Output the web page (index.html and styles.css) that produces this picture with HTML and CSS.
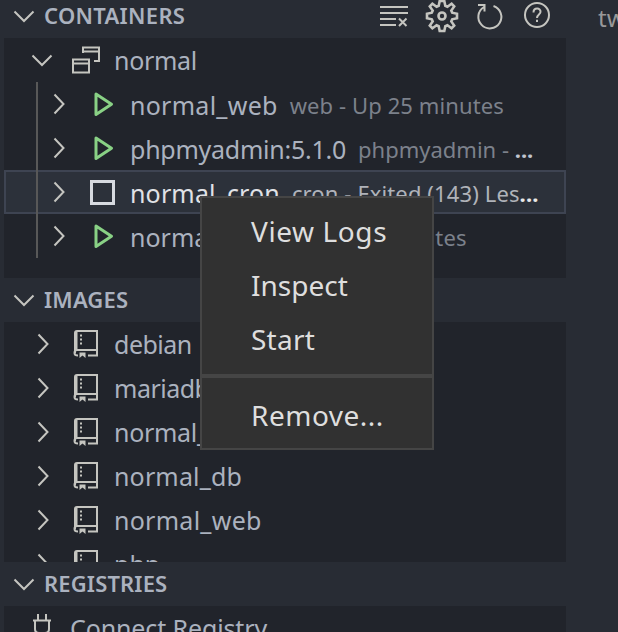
FILE: index.html
```
<!DOCTYPE html>
<html lang="en">
<head>
<meta charset="utf-8">
<title>Containers</title>
<link rel="stylesheet" href="styles.css">
</head>
<body>
<svg class="defs" width="0" height="0">
  <symbol id="down" viewBox="0 0 22 14"><path d="M1.5 2.500 11 12 20.500 2.500"/></symbol>
  <symbol id="right" viewBox="0 0 14 22"><path d="M1.500 1.500 10.500 11 1.500 20.500"/></symbol>
  <symbol id="play" viewBox="0 0 22 26"><path d="M3 3V23.500L18.500 13.200Z"/></symbol>
  <symbol id="book" viewBox="0 0 26 30"><path d="M2 24V4Q2 2 4 2H24V26.500H15M24 21H4Q1.500 21 1.500 24Q1.500 26.500 5 26.500M3.500 3V21"/><path class="dots" d="M7 5.500h2v2h-2zM7 9.500h2v2h-2zM7 13.500h2v2h-2zM6.500 23.500h6V29l-3-2.500L6.500 29z"/></symbol>
</svg>
<main class="window">
  <aside class="sidebar">
    <header class="section first"><svg class="down"><use href="#down"/></svg><h2 class="t-containers">CONTAINERS</h2>
      <div class="actions">
        <svg width="30" height="24" viewBox="0 0 30 24"><path d="M1 3H29M1 9H29M1 15H17M1 21H17M20 14.500 27.500 22M27.500 14.500 20 22"/></svg>
        <svg class="gear" width="34" height="34" viewBox="-17 -17 34 34"><path d="M-2.300 -15H2.300L3.300 -10.200L5.400 -9.300L9.600 -12.200L12.200 -9.600L9.300 -5.400L10.200 -3.300L15 -2.300V2.300L10.200 3.300L9.300 5.400L12.200 9.600L9.600 12.200L5.400 9.300L3.300 10.200L2.300 15H-2.300L-3.300 10.200L-5.400 9.300L-9.600 12.200L-12.200 9.600L-9.300 5.400L-10.200 3.300L-15 2.300V-2.300L-10.200 -3.300L-9.300 -5.400L-12.200 -9.600L-9.600 -12.200L-5.400 -9.300L-3.300 -10.200Z"/><circle r="3.500"/></svg>
        <svg class="refresh" width="28" height="28" viewBox="0 0 28 28"><path d="M17.500 4A11.500 11.500 0 1 1 8 5M2 3H8.500V9.500"/></svg>
        <svg width="28" height="28" viewBox="0 0 28 28"><circle cx="14" cy="13" r="12"/><path d="M10.500 10.500C10.500 5 18 5.500 17.500 10C17.300 12.500 14 12.500 14 16M14 17.800V20"/></svg>
      </div>
    </header>
    <div class="tree containers">
      <div class="row root"><svg class="down"><use href="#down"/></svg><svg class="group" viewBox="0 0 30 28"><path d="M12 7V1.500H28V15H23M12 5.500H28M2 13.500H18V26.500H2ZM2 17.500H18"/></svg><span class="name t-normal">normal</span></div>
      <div class="children">
        <div class="row"><svg class="right"><use href="#right"/></svg><svg class="play"><use href="#play"/></svg><span class="name t-wide">normal_web</span><span class="desc t-web">web - Up 25 minutes</span></div>
        <div class="row"><svg class="right"><use href="#right"/></svg><svg class="play"><use href="#play"/></svg><span class="name t-php">phpmyadmin:5.1.0</span><span class="desc">phpmyadmin - <b>...</b></span></div>
        <div class="row selected"><svg class="right"><use href="#right"/></svg><i class="stopped"></i><span class="name t-cron">normal_cron</span><span class="desc t-crond">cron - Exited (143) Les<b>...</b></span></div>
        <div class="row"><svg class="right"><use href="#right"/></svg><svg class="play"><use href="#play"/></svg><span class="name">normal_db</span><span class="desc t-db">db - Up 25 minutes</span></div>
      </div>
    </div>
    <header class="section"><svg class="down"><use href="#down"/></svg><h2 class="t-images">IMAGES</h2></header>
    <div class="tree images">
      <div class="row"><svg class="right"><use href="#right"/></svg><svg class="book"><use href="#book"/></svg><span class="name t-debian">debian</span></div>
      <div class="row"><svg class="right"><use href="#right"/></svg><svg class="book"><use href="#book"/></svg><span class="name t-debian">mariadb</span></div>
      <div class="row"><svg class="right"><use href="#right"/></svg><svg class="book"><use href="#book"/></svg><span class="name t-normal">normal_cron</span></div>
      <div class="row"><svg class="right"><use href="#right"/></svg><svg class="book"><use href="#book"/></svg><span class="name t-cron">normal_db</span></div>
      <div class="row"><svg class="right"><use href="#right"/></svg><svg class="book"><use href="#book"/></svg><span class="name t-wide">normal_web</span></div>
      <div class="row"><svg class="right"><use href="#right"/></svg><svg class="book"><use href="#book"/></svg><span class="name">php</span></div>
    </div>
    <header class="section"><svg class="down"><use href="#down"/></svg><h2 class="t-registries">REGISTRIES</h2></header>
    <div class="tree"><div class="row connect"><svg width="20" height="30" viewBox="0 0 20 30"><path d="M6 1V7M14 1V7M1 7.500H19M3 7.500V16Q3 20 7 20H13Q17 20 17 16V7.500M10 20V28"/></svg><span class="name t-connect">Connect Registry</span></div></div>
  </aside>
  <div class="editor">tw</div>
</main>
<nav class="menu"><div class="t-logs">View Logs</div><div>Inspect</div><div class="t-start">Start</div><hr><div class="t-remove">Remove...</div></nav>
</body>
</html>
```
FILE: styles.css
```
* { box-sizing: border-box; }
body { margin: 0; background: #282c34; color: #abb2bf; font: 25px "Noto Sans", sans-serif; overflow: hidden; }
.defs { position: absolute; }
svg { flex: none; fill: none; stroke: #c5c5c0; stroke-width: 2; overflow: visible; }
.window { display: flex; height: 632px; overflow: hidden; }
.sidebar { width: 566px; padding-left: 4px; flex: none; }
.section { height: 44px; display: flex; align-items: center; padding-left: 9px; }
.first { height: 38px; padding-bottom: 6px; }
h2 { margin: 0 0 0 9px; font-size: 22px; font-weight: 600; line-height: 44px; white-space: nowrap; padding-bottom: 2px; }
.actions { display: flex; align-items: center; margin-left: auto; padding-right: 15px; }
.gear { margin: 0 17px 0 16px; stroke-width: 2.6; }
.refresh { margin-right: 19px; }
.down { width: 22px; height: 14px; }
.right { width: 14px; height: 22px; margin-left: 1px; }
.tree { background: #21242b; overflow: hidden; }
.containers { height: 240px; }
.images { height: 240px; }
.row { height: 44px; display: flex; align-items: center; padding-left: 32px; white-space: nowrap; position: relative; }
.root { padding-left: 27px; }
.group { width: 30px; height: 28px; margin-left: 18px; }
.group + .name { margin-left: 13px; }
.name { line-height: 44px; }
.children { position: relative; }
.children::before { content: ""; position: absolute; z-index: 1; left: 32px; top: 0; width: 2px; height: 176px; background: #585858; }
.children .row { padding-left: 48px; }
.children .name { padding-top: 1px; }
.play { width: 22px; height: 26px; margin-left: 26px; stroke: #89d185; stroke-width: 3; stroke-linejoin: round; }
.stopped { width: 25px; height: 25px; border: 3px solid #d7dae0; margin: 0 15px 0 23px; flex: none; }
.play + .name { margin-left: 15px; }
.desc { margin-left: 12px; font-size: 22px; color: #7c818b; line-height: 44px; padding-top: 1px; }
.desc b { color: #c0c5cf; }
.selected { background: #2c313a; color: #e0e2e6; }
.selected::after { content: ""; position: absolute; inset: 0; border: 2px solid #3e4452; }
.selected .desc { color: #b0b3b9; }
.selected .desc b { color: #e8e8e8; }
.book { width: 26px; height: 30px; margin-left: 22px; }
.book + .name { margin-left: 15px; }
.dots { fill: #c5c5c0; stroke: none; }
.connect { padding-left: 28px; }
.connect .name { margin-left: 18px; }
.editor { padding-left: 32px; line-height: 36px; font-size: 24px; color: #999; }
.menu { position: absolute; left: 200px; top: 196px; width: 234px; height: 254px; background: #313131; border: 2px solid #454545; padding-top: 6px; color: #dedede; font-size: 28px; white-space: nowrap; }
.menu div { height: 54px; line-height: 54px; padding-left: 49px; }
.menu hr { height: 4px; margin: 8px 0 10px; border: 0; background: #454545; }
.t-containers { letter-spacing: .3px; }
.t-images, .t-registries { letter-spacing: .15px; }
.t-normal { letter-spacing: -.3px; }
.t-wide { letter-spacing: .27px; }
.t-php { letter-spacing: -.25px; }
.t-cron { letter-spacing: .15px; }
.t-web, .t-db { letter-spacing: .1px; }
.t-crond { letter-spacing: .12px; }
.t-debian { letter-spacing: -.5px; }
.t-connect { letter-spacing: -.12px; }
.t-logs { letter-spacing: .6px; }
.t-start { letter-spacing: .25px; }
.t-remove { letter-spacing: .5px; }
```
